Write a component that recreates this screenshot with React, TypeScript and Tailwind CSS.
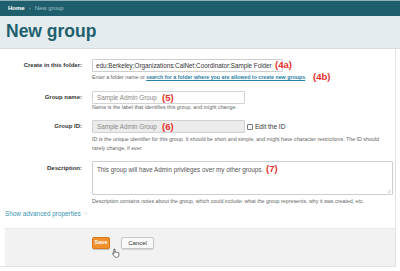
import { ChevronDown } from "lucide-react";

const Note = ({ children, className }: { children: React.ReactNode; className: string }) => (
  <span className={`absolute font-bold text-[9.5px] leading-[10px] text-[#e8312f] whitespace-nowrap ${className}`}>
    {children}
  </span>
);

const Label = ({ children, className = "h-[13px]" }: { children: React.ReactNode; className?: string }) => (
  <div className={`w-[92px] shrink-0 pr-[10px] flex items-center justify-end text-[6px] font-bold text-[#333] ${className}`}>
    {children}
  </div>
);

const Help = ({ children, className = "" }: { children: React.ReactNode; className?: string }) => (
  <p className={`text-[5.3px] text-[#666] ${className}`}>{children}</p>
);

export default function App() {
  return (
    <div
      className="w-[400px] h-[271px] overflow-hidden bg-white"
      style={{ fontFamily: '"Liberation Sans", Arial, sans-serif' }}
    >
      {/* breadcrumb bar */}
      <div className="h-[16px] bg-[#1f5f6d] border-t border-[#8fb0b8] flex items-center pl-[8px] text-[6px] gap-[4px]">
        <span className="text-white font-bold">Home</span>
        <span className="text-[#8fb3bb]">›</span>
        <span className="text-[#9fc0c7]">New group</span>
      </div>

      {/* title */}
      <div className="h-[33px] bg-[#e4ecef] border-b border-[#d6dee1] flex items-center pl-[6px]">
        <h1 className="text-[17.5px] font-bold text-[#215f6e] leading-none">New group</h1>
      </div>

      <div className="mr-[4px] border-r border-b border-[#e3e3e3] h-[218px] pt-[10px]">
        {/* folder */}
        <div className="flex">
          <Label>Create in this folder:</Label>
          <div className="relative">
            <div className="w-[191px] h-[13px] border border-[#cdcdcd] rounded-[1px] flex items-center pl-[3px] text-[6.3px] text-[#333] whitespace-nowrap">
              edu:Berkeley:Organizations:CalNet:Coordinator:Sample Folder
            </div>
            <Help className="mt-[1px] leading-[9px] whitespace-nowrap">
              Enter a folder name or{" "}
              <span className="text-[#2a7fa6] font-bold underline">
                search for a folder where you are allowed to create new groups
              </span>
              .
            </Help>
            <Note className="left-[183px] top-[1px]">(4a)</Note>
            <Note className="left-[221px] top-[13px]">(4b)</Note>
          </div>
        </div>

        {/* group name */}
        <div className="flex mt-[9px]">
          <Label>Group name:</Label>
          <div className="relative">
            <div className="w-[153px] h-[13px] border border-[#d3d3d3] rounded-[1px] flex items-center pl-[4px] text-[6.3px] text-[#888]">
              Sample Admin Group
            </div>
            <Help className="mt-[-1px] leading-[8px]">
              Name is the label that identifies this group, and might change.
            </Help>
            <Note className="left-[70px] top-[1.5px]">(5)</Note>
          </div>
        </div>

        {/* group id */}
        <div className="flex mt-[9px]">
          <Label>Group ID:</Label>
          <div className="relative flex-1 pr-[8px]">
            <div className="flex items-center">
              <div className="w-[153px] h-[13px] border border-[#d0d0d0] bg-[#ececec] rounded-[1px] flex items-center pl-[4px] text-[6.3px] text-[#888]">
                Sample Admin Group
              </div>
              <span className="ml-[2px] w-[6px] h-[6px] border border-[#777] bg-white rounded-[1px] mt-[1px]" />
              <span className="ml-[2px] text-[6.5px] text-[#333]">Edit the ID</span>
            </div>
            <Help className="mt-[2px] leading-[9px]">
              ID is the unique identifier for this group. It should be short and simple, and might have character
              restrictions. The ID should rarely change, if ever.
            </Help>
            <Note className="left-[70px] top-[1.5px]">(6)</Note>
          </div>
        </div>

        {/* description */}
        <div className="flex mt-[8px]">
          <Label className="h-[15px] items-center">Description:</Label>
          <div className="relative flex-1 pr-[2px]">
            <div className="relative h-[34px] border border-[#cdcdcd] rounded-[1px] pl-[4px] pt-[3px] text-[6.3px] text-[#555]">
              This group will have Admin privileges over my other groups.
              <svg className="absolute right-[1px] bottom-[1px]" width="4" height="4" viewBox="0 0 4 4">
                <path d="M0.5 4L4 0.5M2.3 4L4 2.3" stroke="#aaa" strokeWidth="0.6" />
              </svg>
            </div>
            <Help className="mt-[2px] leading-[8px] whitespace-nowrap">
              Description contains notes about the group, which could include: what the group represents, why it was
              created, etc.
            </Help>
            <Note className="left-[174px] top-[2.5px]">(7)</Note>
          </div>
        </div>

        {/* advanced */}
        <div className="mt-[4px] pl-[5px] h-[9px] flex items-center gap-[2px] text-[6.4px] text-[#3a94b0]">
          Show advanced properties
          <ChevronDown size={5} strokeWidth={2} className="text-[#9ab]" />
        </div>

        {/* footer */}
        <div className="mt-[10px] ml-[5px] h-[38px] bg-[#f2f2f2] border-t border-[#e8e8e8] flex items-start pt-[8px] pl-[87px] gap-[11px]">
          <div className="relative flex">
            <button className="w-[18px] h-[12px] rounded-[2px] bg-[#f0912d] border border-[#d9791b] text-white text-[5.6px] font-bold shadow-[0_1px_1px_rgba(0,0,0,0.2)] leading-none">
              Save
            </button>
            <svg className="absolute left-[20px] top-[11px]" width="8" height="10" viewBox="0 0 9 11">
              <path
                d="M2.5 0.8c.5 0 .8.3.8.8v3.2c.2-.4.5-.5.8-.5.4 0 .7.3.7.6.2-.3.5-.4.8-.4.4 0 .7.3.7.7.2-.2.4-.3.7-.3.4 0 .7.3.7.7v2.3c0 1.4-1 2.4-2.4 2.4H4.4C3.6 10.3 3 9.9 2.6 9.3L.6 6.4c-.2-.3-.1-.7.2-.9.3-.2.7-.1.9.1l.4.6V1.6c0-.5.3-.8.4-.8z"
                fill="#fff"
                stroke="#222"
                strokeWidth="0.7"
              />
            </svg>
          </div>
          <button className="w-[33px] h-[12px] rounded-[2px] bg-[#f9f9f9] border border-[#c7c7c7] text-[#333] text-[6px] leading-none shadow-[0_1px_1px_rgba(0,0,0,0.12)]">
            Cancel
          </button>
        </div>
      </div>
    </div>
  );
}
